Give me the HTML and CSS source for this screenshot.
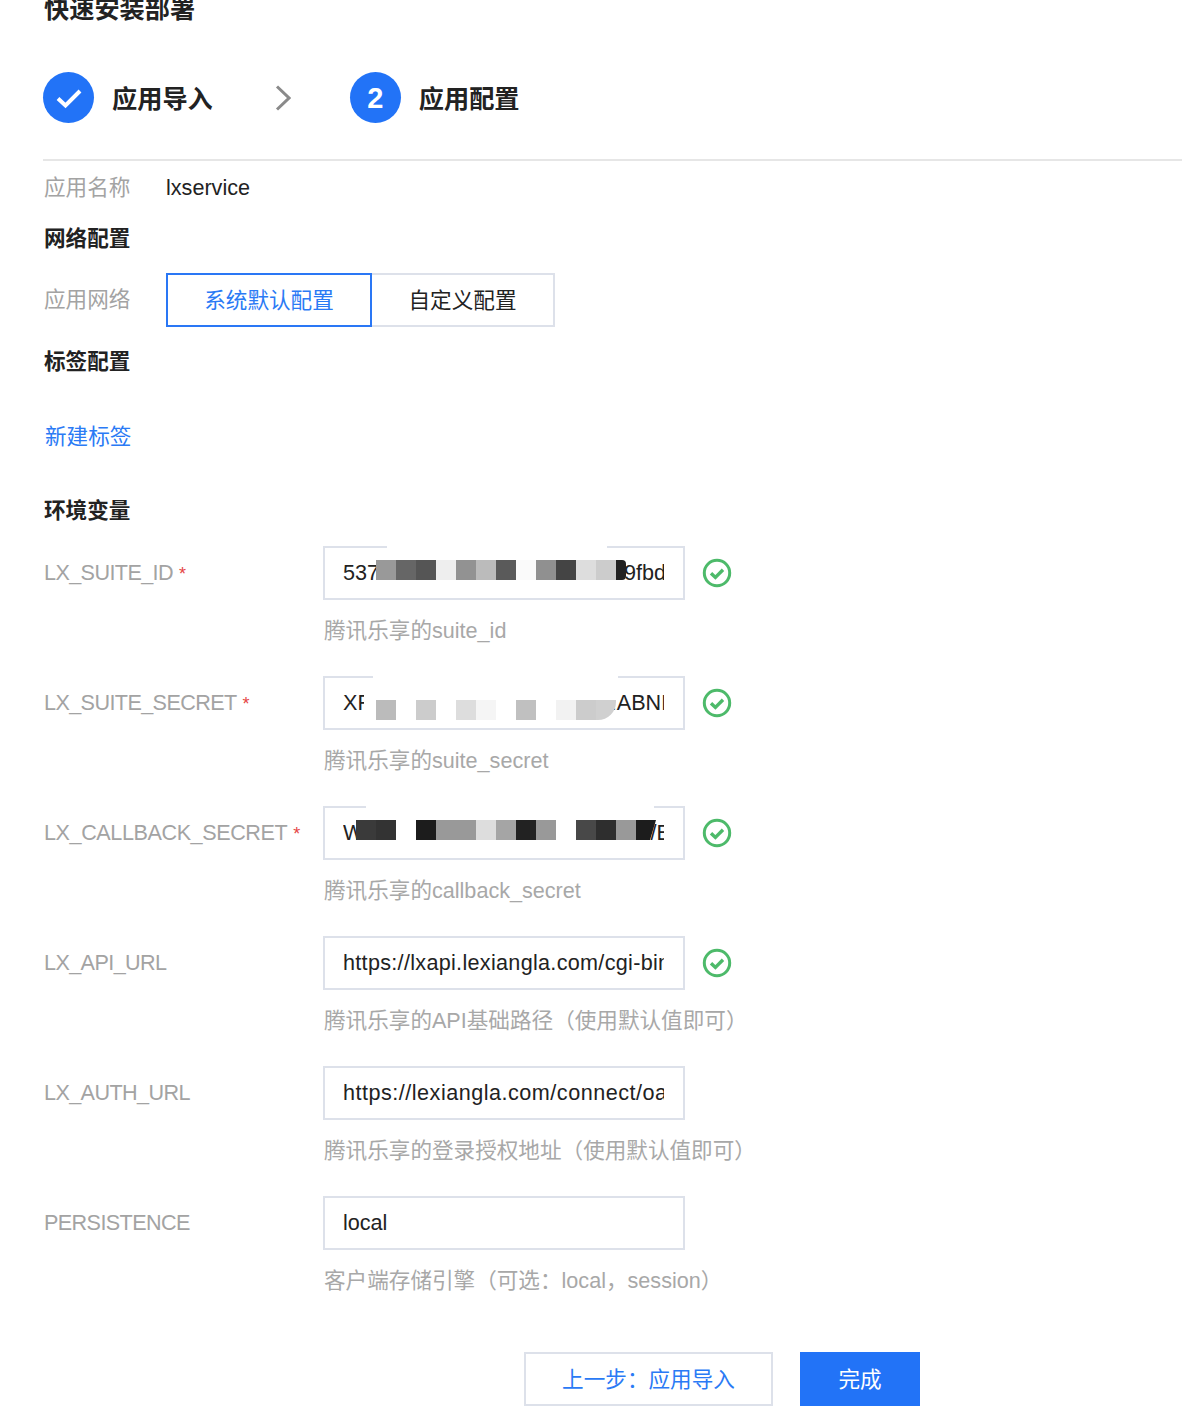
FILE: index.html
```html
<!DOCTYPE html>
<html lang="zh-CN">
<head>
<meta charset="utf-8">
<title>快速安装部署</title>
<link rel="stylesheet" href="styles.css">
</head>
<body>
<main class="page">
  <h1 class="title">快速安装部署</h1>
  <div class="steps">
    <div class="step">
      <span class="badge"><svg width="28" height="22" viewBox="0 0 28 22"><path d="M3 11.5l7.5 7L25 4" fill="none" stroke="#fff" stroke-width="4"/></svg></span>
      <span class="step-name">应用导入</span>
    </div>
    <svg class="chevron" width="16" height="26" viewBox="0 0 16 26"><path d="M2 1.5L14 13 2 24.5" fill="none" stroke="#8a8a8a" stroke-width="3"/></svg>
    <div class="step">
      <span class="badge">2</span>
      <span class="step-name">应用配置</span>
    </div>
  </div>
  <hr class="rule">
  <div class="info-row"><span class="info-label">应用名称</span><span class="info-value">lxservice</span></div>
  <h2 class="section section-net">网络配置</h2>
  <div class="info-row net-row">
    <span class="info-label">应用网络</span>
    <div class="segmented">
      <button class="seg seg-on">系统默认配置</button>
      <button class="seg seg-off">自定义配置</button>
    </div>
  </div>
  <h2 class="section section-tag">标签配置</h2>
  <a class="link">新建标签</a>
  <h2 class="section section-env">环境变量</h2>

  <div class="field">
    <label class="field-label">LX_SUITE_ID<i class="req">*</i></label>
    <div class="control">
      <input class="input" value="5370000000000000000000s.9fbdaaaa" readonly>
      <span class="cover cover-a"></span>
      <span class="mosaic mosaic-a"><i class="g99"></i><i class="g66"></i><i class="g55"></i><i class="gee"></i><i class="g92"></i><i class="gbb"></i><i class="g5a"></i><i class="gfa"></i><i class="g90"></i><i class="g44"></i><i class="gdd"></i><i class="gcc"></i><i class="g22 half"></i></span>
    </div>
    <svg class="ok" width="30" height="30" viewBox="0 0 30 30"><circle cx="15" cy="15" r="12.7" fill="none" stroke="#4dba6a" stroke-width="3"/><path d="M9 15.2l4.4 4.2 7.6-7.6" fill="none" stroke="#4dba6a" stroke-width="3.4"/></svg>
    <p class="hint">腾讯乐享的suite_id</p>
  </div>

  <div class="field">
    <label class="field-label">LX_SUITE_SECRET<i class="req">*</i></label>
    <div class="control">
      <input class="input" value="XF00000000000000000000.ABNDAAAA" readonly>
      <span class="cover cover-b"></span>
      <span class="mosaic mosaic-b"><i class="gbb"></i><i class="gff"></i><i class="gcc"></i><i class="gff"></i><i class="gdd"></i><i class="gf5"></i><i class="gff"></i><i class="gc0"></i><i class="gff"></i><i class="gf2"></i><i class="gcc"></i><i class="gd0 curve"></i></span>
    </div>
    <svg class="ok" width="30" height="30" viewBox="0 0 30 30"><circle cx="15" cy="15" r="12.7" fill="none" stroke="#4dba6a" stroke-width="3"/><path d="M9 15.2l4.4 4.2 7.6-7.6" fill="none" stroke="#4dba6a" stroke-width="3.4"/></svg>
    <p class="hint">腾讯乐享的suite_secret</p>
  </div>

  <div class="field">
    <label class="field-label field-label-wide">LX_CALLBACK_SECRET<i class="req">*</i></label>
    <div class="control">
      <input class="input" value="W00000000000000000000000s/EAAAA" readonly>
      <span class="cover cover-c"></span>
      <span class="mosaic mosaic-c"><i class="g3a"></i><i class="g33"></i><i class="gff"></i><i class="g1c"></i><i class="g99"></i><i class="g99"></i><i class="gdd"></i><i class="ga5"></i><i class="g22"></i><i class="g99"></i><i class="gff"></i><i class="g48"></i><i class="g2e"></i><i class="g99"></i><i class="g1c slant"></i></span>
    </div>
    <svg class="ok" width="30" height="30" viewBox="0 0 30 30"><circle cx="15" cy="15" r="12.7" fill="none" stroke="#4dba6a" stroke-width="3"/><path d="M9 15.2l4.4 4.2 7.6-7.6" fill="none" stroke="#4dba6a" stroke-width="3.4"/></svg>
    <p class="hint">腾讯乐享的callback_secret</p>
  </div>

  <div class="field">
    <label class="field-label">LX_API_URL</label>
    <div class="control"><input class="input input-url" value="https://lxapi.lexiangla.com/cgi-bin/token" readonly></div>
    <svg class="ok" width="30" height="30" viewBox="0 0 30 30"><circle cx="15" cy="15" r="12.7" fill="none" stroke="#4dba6a" stroke-width="3"/><path d="M9 15.2l4.4 4.2 7.6-7.6" fill="none" stroke="#4dba6a" stroke-width="3.4"/></svg>
    <p class="hint">腾讯乐享的API基础路径（使用默认值即可）</p>
  </div>

  <div class="field">
    <label class="field-label">LX_AUTH_URL</label>
    <div class="control"><input class="input input-auth" value="https://lexiangla.com/connect/oauth2" readonly></div>
    <p class="hint">腾讯乐享的登录授权地址（使用默认值即可）</p>
  </div>

  <div class="field">
    <label class="field-label">PERSISTENCE</label>
    <div class="control"><input class="input" value="local" readonly></div>
    <p class="hint">客户端存储引擎（可选：local，session）</p>
  </div>

  <div class="actions">
    <button class="btn btn-ghost">上一步：应用导入</button>
    <button class="btn btn-primary">完成</button>
  </div>
</main>
</body>
</html>
```
FILE: styles.css
```css
* { box-sizing: border-box; }
html, body { margin: 0; padding: 0; background: #fff; }
body {
  height: 1414px;
  overflow: hidden;
  font-family: "Liberation Sans", "Noto Sans CJK SC", sans-serif;
  font-size: 21.6px;
  line-height: 30px;
  color: #222;
}
.page { padding-left: 43px; }
.title {
  margin: -6px 0 0;
  padding-left: 1px;
  font-size: 25.2px;
  line-height: 30px;
  font-weight: 700;
  color: #222;
}
.steps { display: flex; align-items: center; margin-top: 48px; height: 51px; }
.step { display: flex; align-items: center; gap: 18px; }
.badge {
  width: 51px;
  height: 51px;
  border-radius: 50%;
  background: #2273f7;
  color: #fff;
  font-size: 29px;
  font-weight: 700;
  display: flex;
  align-items: center;
  justify-content: center;
}
.step-name { padding-top: 2px; font-size: 25.2px; font-weight: 700; color: #222; }
.chevron { margin: 0 59px 0 62px; }
.rule { margin: 36px 0 0; border: 0; height: 2px; background: #e6e6e6; }
.info-row { display: flex; margin-top: 12px; }
.info-label { width: 123px; padding-left: 1px; color: #a3a3a3; }
.info-value { color: #222; }
.section { margin: 0; padding-left: 1px; font-size: 21.6px; line-height: 30px; font-weight: 700; color: #222; }
.section-net { margin-top: 21px; }
.net-row { margin-top: 19px; align-items: center; }
.segmented { display: flex; }
.seg {
  height: 54px;
  font: inherit;
  background: #fff;
  padding: 2px 0 0;
  margin: 0;
  border-style: solid;
  border-width: 2px;
}
.seg-on { width: 206px; color: #2a7af5; border-color: #2a77f5; }
.seg-off { width: 183px; color: #222; border-color: #dde1ea; border-left: 0; }
.section-tag { margin-top: 20px; }
.link { display: block; margin-top: 45px; color: #2a7af5; padding-left: 2px; }
.section-env { margin-top: 44px; }
.field {
  display: grid;
  grid-template-columns: 280px 362px auto;
  grid-template-rows: 54px 30px;
  row-gap: 16px;
  align-items: center;
  margin-bottom: 30px;
}
.section-env + .field { margin-top: 20px; }
.field-label { padding-left: 1px; letter-spacing: -0.6px; color: #a3a3a3; }
.field-label-wide { letter-spacing: -0.42px; }
.req {
  font-style: normal;
  letter-spacing: 0;
  color: #e54545;
  font-size: 18px;
  margin-left: 6px;
}
.control { position: relative; height: 54px; }
.input {
  display: block;
  width: 362px;
  height: 54px;
  padding: 0 19px 0 18px;
  border: 2px solid #dde1ea;
  border-radius: 0;
  background: #fff;
  outline: 0;
  font: inherit;
  color: #222;
}
.input-url { letter-spacing: 0.3px; }
.input-auth { letter-spacing: 0.5px; }
.ok { margin-left: 17px; }
.hint { grid-column: 2 / 4; margin: 0; padding-left: 1px; color: #a8a8a8; white-space: nowrap; }
.cover { position: absolute; background: #fff; }
.cover-a { left: 64px; top: 0; width: 220px; height: 2px; }
.cover-b { left: 41px; top: 2px; width: 254px; height: 50px; border-radius: 0 0 34px 0; }
.cover-b::before { content: ""; position: absolute; left: 9px; right: 0; top: -2px; height: 2px; background: #fff; }
.cover-c { left: 43px; top: 0; width: 288px; height: 2px; }
.mosaic { position: absolute; display: flex; height: 20px; }
.mosaic i { display: block; width: 20px; height: 20px; }
.mosaic-a { left: 53px; top: 14px; }
.mosaic-b { left: 53px; top: 24px; }
.mosaic-c { left: 33px; top: 14px; }
.mosaic i.half { width: 10px; border-radius: 0 4px 4px 0; }
.mosaic i.curve { border-radius: 0 0 18px 0; }
.mosaic i.slant { clip-path: polygon(0 0, 100% 0, 70% 100%, 0 100%); }
.gff { background: #fff; } .gfa { background: #fafafa; } .gf5 { background: #f5f5f5; } .gf2 { background: #f2f2f2; }
.gee { background: #eee; } .gdd { background: #ddd; } .gd0 { background: #d0d0d0; } .gcc { background: #ccc; }
.gc0 { background: #c0c0c0; } .gbb { background: #bbb; } .ga5 { background: #a5a5a5; } .g99 { background: #999; }
.g92 { background: #929292; } .g90 { background: #909090; } .g66 { background: #666; } .g5a { background: #5a5a5a; }
.g55 { background: #555; } .g48 { background: #484848; } .g44 { background: #444; } .g3a { background: #3a3a3a; }
.g33 { background: #333; } .g2e { background: #2e2e2e; } .g22 { background: #222; } .g1c { background: #1c1c1c; }
.actions { display: flex; gap: 27px; padding-left: 481px; margin-top: 56px; }
.btn { height: 54px; font: inherit; margin: 0; padding: 2px 0 0; border-radius: 0; border-style: solid; border-width: 2px; }
.btn-ghost { width: 249px; background: #fff; color: #2a7af5; border-color: #dde1ea; }
.btn-primary { width: 120px; background: #2273f7; border-color: #2273f7; color: #fff; }
```
